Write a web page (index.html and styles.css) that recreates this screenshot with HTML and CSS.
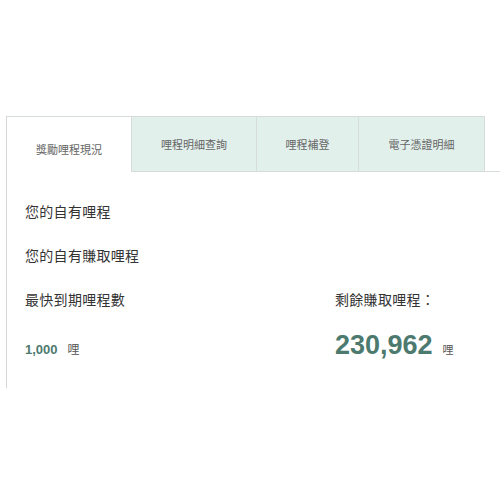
FILE: index.html
```html
<!DOCTYPE html>
<html lang="zh-Hant">
<head>
<meta charset="utf-8">
<link rel="stylesheet" href="styles.css">
</head>
<body>
<div class="panel">
  <div class="tabs">
    <div class="tab active">獎勵哩程現況</div>
    <div class="tab t2">哩程明細查詢</div>
    <div class="tab t3">哩程補登</div>
    <div class="tab t4">電子憑證明細</div>
    <div class="tab-fill"></div>
  </div>
  <div class="content">
    <div class="label full">您的自有哩程</div>
    <div class="label full">您的自有賺取哩程</div>
    <div class="label">最快到期哩程數</div>
    <div class="label">剩餘賺取哩程：</div>
    <div class="value small"><span class="num">1,000</span><span class="unit">哩</span></div>
    <div class="value big"><span class="num">230,962</span><span class="unit">哩</span></div>
  </div>
</div>
</body>
</html>
```
FILE: styles.css
```css
html, body {
  margin: 0;
  padding: 0;
  background: #fff;
  font-family: "Liberation Sans", "Noto Sans CJK TC", sans-serif;
}
.panel {
  margin-top: 116px;
  margin-left: 6px;
}
.tabs {
  display: flex;
  height: 56px;
}
.tab {
  box-sizing: border-box;
  display: flex;
  align-items: center;
  justify-content: center;
  font-size: 11px;
  color: #666;
  background: #e2f0ec;
  border-top: 1px solid #d6dcda;
  border-right: 1px solid #d6dcda;
  border-bottom: 1px solid #d6dcda;
}
.tab.active {
  width: 126px;
  background: #fff;
  border-left: 1px solid #d6d6d6;
  border-bottom: none;
  padding-top: 8px;
}
.t2 { width: 125px; }
.t3 { width: 102px; }
.t4 { width: 126px; }
.tab-fill {
  flex: 1;
  border-bottom: 1px solid #d6dcda;
}
.content {
  border-left: 1px solid #d6d6d6;
  padding: 30px 0 27px 18px;
  display: grid;
  grid-template-columns: 310px 1fr;
  row-gap: 24px;
  align-items: baseline;
}
.label {
  font-size: 14px;
  letter-spacing: 0.3px;
  line-height: 20px;
  color: #333;
}
.label.full {
  grid-column: 1 / 3;
}
.value {
  margin-top: -5px;
}
.value .num {
  font-weight: bold;
  color: #4d7a6f;
}
.value .unit {
  color: #555;
  font-size: 12px;
}
.small .num {
  font-size: 13px;
}
.small .unit {
  margin-left: 10px;
}
.big .num {
  font-size: 27px;
  line-height: 32px;
}
.big .unit {
  margin-left: 10px;
  font-size: 11px;
}
```
